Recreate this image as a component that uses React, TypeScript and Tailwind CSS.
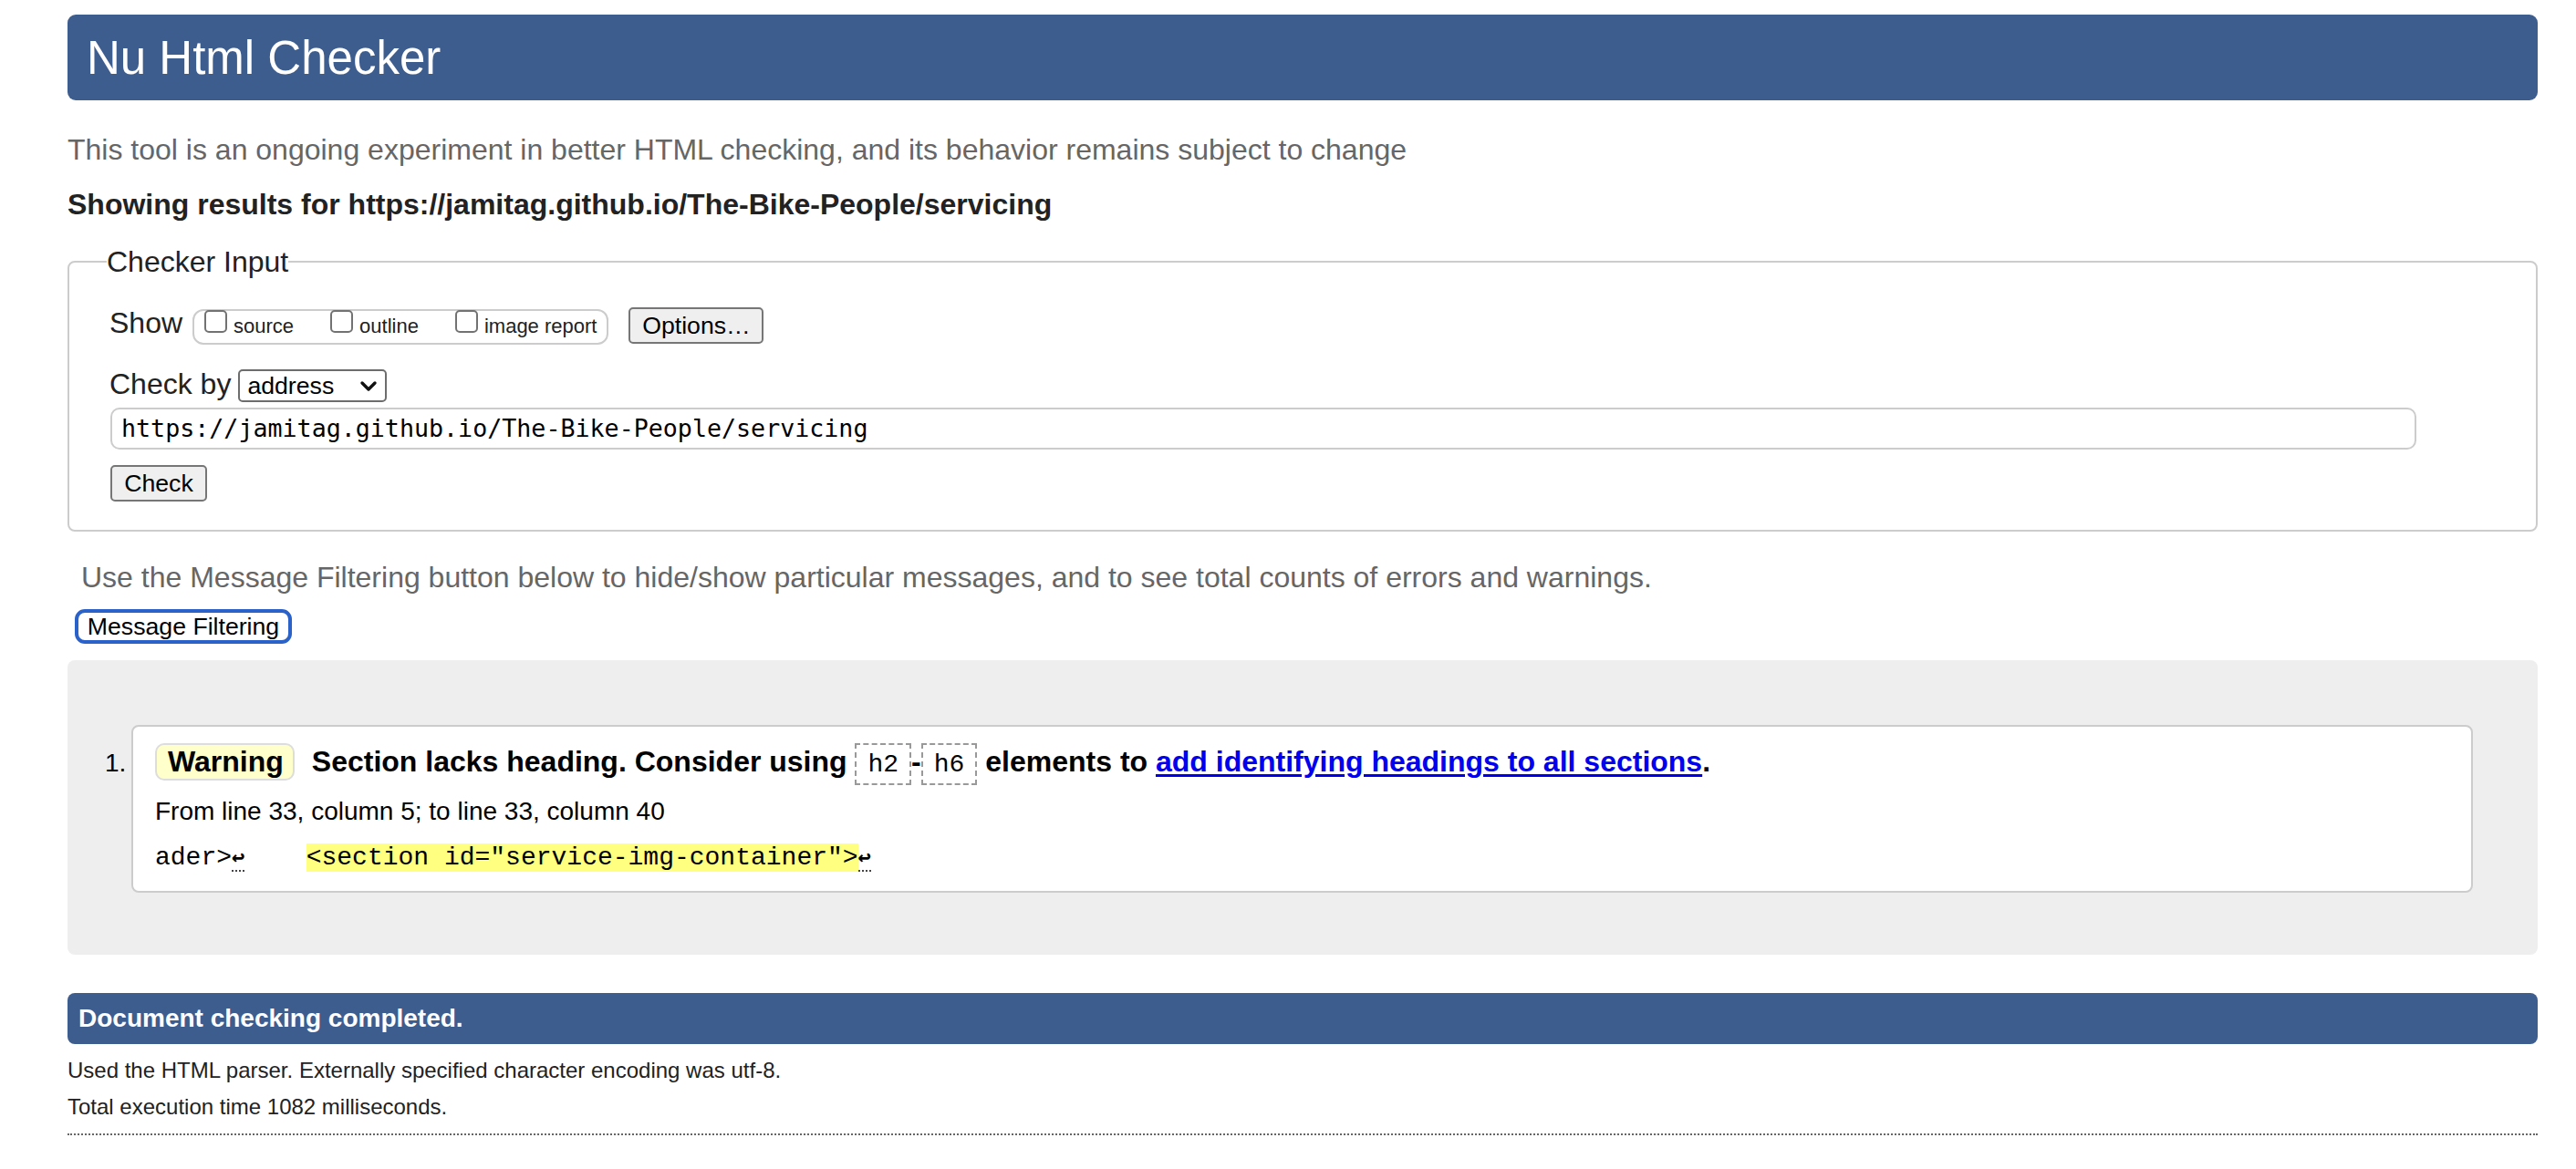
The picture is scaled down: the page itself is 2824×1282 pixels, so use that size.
import React from 'react'

function Box({ children }: { children: React.ReactNode }) {
  return (
    <span className="inline-block border-2 border-dashed border-[#999] px-[12px] pt-[8px] pb-[6px] font-['Liberation_Mono',monospace] text-[28px] leading-none font-normal">
      {children}
    </span>
  )
}

function Checkbox({ label }: { label: string }) {
  return (
    <label className="flex items-baseline gap-[7px] -mt-px">
      <span className="block w-[25px] h-[25px] rounded-[5px] border-2 border-[#727272] bg-white" />
      <span className="text-[22px] leading-none text-[#222]">{label}</span>
    </label>
  )
}

function Ret() {
  return <span className="border-b-2 border-dotted border-[#444] font-['DejaVu_Sans_Mono',monospace] text-[24px] font-bold">↩</span>
}

export default function App() {
  return (
    <div className="min-h-screen bg-white pl-[74px] pr-[42px] pt-[16px] pb-10 font-['Liberation_Sans',Arial,sans-serif] text-[#222]">
      <div className="h-[94px] rounded-[9px] bg-[#3e5d8f] flex items-center pl-[21px]">
        <h1 className="text-[51px] leading-none text-white font-normal">Nu Html Checker</h1>
      </div>

      <p className="mt-[38px] text-[32px] leading-none text-[#666]">
        This tool is an ongoing experiment in better HTML checking, and its behavior remains subject to change
      </p>
      <p className="mt-[28px] text-[32px] leading-none font-bold text-[#222]">
        Showing results for https://jamitag.github.io/The-Bike-People/servicing
      </p>

      <fieldset className="mt-[31px] border-2 border-[#ccc] rounded-[8px] pl-[44px] pr-[44px] pb-[31px]">
        <legend className="-ml-[3px] text-[32px] leading-none text-[#222]">Checker Input</legend>

        <div className="mt-[34px] flex items-start">
          <span className="mt-px text-[32px] leading-none">Show</span>
          <div className="ml-[11px] mt-[2px] flex h-[39px] items-start gap-[40px] rounded-[12px] border-2 border-[#ccc] pl-[11px] pr-[11px]">
            <Checkbox label="source" />
            <Checkbox label="outline" />
            <Checkbox label="image report" />
          </div>
          <button className="ml-[22px] h-[40px] w-[148px] rounded-[5px] border-2 border-[#767676] bg-[#efefef] text-[26.67px] leading-none text-black">
            Options…
          </button>
        </div>

        <div className="mt-[27px] flex items-start">
          <span className="text-[32px] leading-none">Check by</span>
          <div className="ml-[8px] flex h-[36px] w-[163px] items-center justify-between rounded-[5px] border-2 border-[#6d6d6d] bg-white pl-[8px] pr-[8px]">
            <span className="text-[26.67px] leading-none text-black">address</span>
            <svg width="20" height="14" viewBox="0 0 20 14" fill="none">
              <path d="M3 4l7 7 7-7" stroke="#111" strokeWidth="3.4" strokeLinecap="round" strokeLinejoin="round" />
            </svg>
          </div>
        </div>

        <div className="mt-[6px] ml-px flex h-[46px] w-[2528px] items-center rounded-[10px] border-2 border-[#ccc] pl-[10px]">
          <span className="font-['DejaVu_Sans_Mono',monospace] text-[26.67px] leading-none text-black">
            https://jamitag.github.io/The-Bike-People/servicing
          </span>
        </div>

        <button className="mt-[17px] ml-px h-[40px] w-[106px] rounded-[5px] border-2 border-[#767676] bg-[#efefef] text-[26.67px] leading-none text-black">
          Check
        </button>
      </fieldset>

      <p className="mt-[34px] ml-[15px] text-[32px] leading-none text-[#666]">
        Use the Message Filtering button below to hide/show particular messages, and to see total counts of errors and warnings.
      </p>
      <button className="mt-[19px] ml-[8px] block h-[38px] w-[238px] rounded-[11px] border-[4px] border-[#2a62c9] bg-white text-[26.67px] leading-none text-black">
        Message Filtering
      </button>

      <div className="mt-[18px] flex rounded-[8px] bg-[#eee] pl-[41px] pr-[71px] pt-[71px] pb-[68px]">
        <span className="mt-[28px] w-[29px] shrink-0 text-[28px] leading-none text-black">1.</span>
        <div className="flex-1 rounded-[8px] border-2 border-[#ccc] bg-white pl-[24px] pt-[18px] pb-[22px] text-black">
          <div className="flex items-baseline font-bold text-[32px] leading-none whitespace-pre">
            <span className="rounded-[10px] border-2 border-[#ddd] bg-[#ffffcc] pl-[12px] pr-[10px] pt-[2px] pb-[3px]">Warning</span>
            <span className="ml-[19px]">Section lacks heading. Consider using </span>
            <Box>h2</Box>
            <span>-</span>
            <Box>h6</Box>
            <span> elements to </span>
            <a href="#" className="text-[#0000ee] underline underline-offset-[3px]">add identifying headings to all sections</a>
            <span>.</span>
          </div>
          <p className="mt-[15px] text-[28px] leading-none">From line 33, column 5; to line 33, column 40</p>
          <p className="mt-[23px] font-['Liberation_Mono',monospace] text-[28px] leading-none whitespace-pre">
            ader&gt;<Ret />{'    '}
            <span className="bg-[#ffff80]">&lt;section id="service-img-container"&gt;</span>
            <Ret />
          </p>
        </div>
      </div>

      <div className="mt-[42px] flex h-[56px] items-center rounded-[8px] bg-[#3e5d8f] pl-[12px]">
        <span className="text-[28px] leading-none font-bold text-white">Document checking completed.</span>
      </div>
      <p className="mt-[17px] text-[24px] leading-none">Used the HTML parser. Externally specified character encoding was utf-8.</p>
      <p className="mt-[16px] text-[24px] leading-none">Total execution time 1082 milliseconds.</p>
      <div className="mt-[17px] border-t-2 border-dotted border-[#666]" />
    </div>
  )
}
